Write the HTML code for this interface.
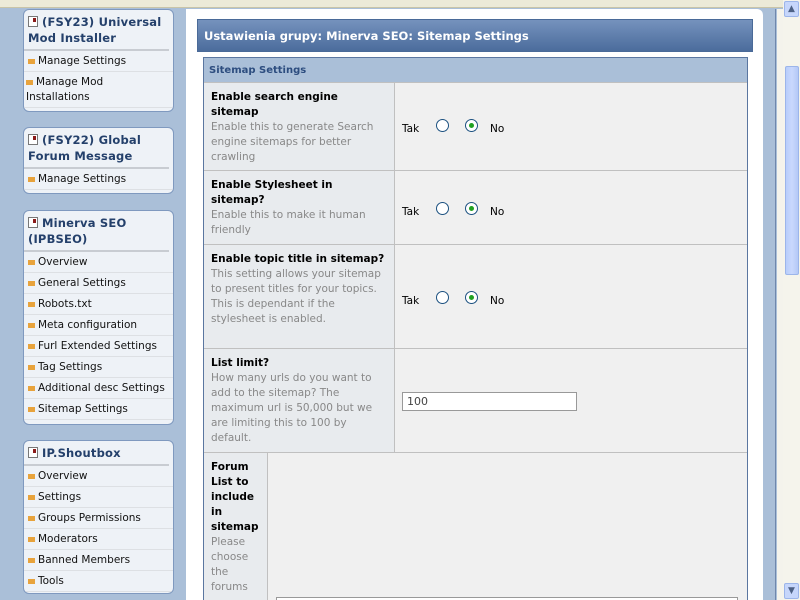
<!DOCTYPE html>
<html><head><meta charset="utf-8"><style>
*{margin:0;padding:0;box-sizing:border-box}
html,body{width:800px;height:600px;overflow:hidden}
body{background:#aabfd8;font-family:"DejaVu Sans",Verdana,sans-serif;position:relative}
.top{position:absolute;left:0;top:0;width:783px;height:8px;background:#ecead8;border-bottom:1px solid #c8c4a8}
.nav{position:absolute;left:23px;width:151px;background:#eef2f7;border:1px solid #7f99bf;border-radius:6px;overflow:hidden}
.nav h3{font-size:11.5px;line-height:16px;color:#24406b;padding:4px 4px 3px 4px;margin:0 4px 0 0;border-bottom:2px solid #c8ccd2;letter-spacing:0.2px}
.ic{display:inline-block;width:10px;height:11px;border:1px solid #777;background:#fff;margin-right:4px;vertical-align:-1px;position:relative}
.ic:after{content:"";position:absolute;left:4px;top:1px;width:3px;height:4px;background:#8b1a1a}
.nav a{display:block;font-size:10.5px;line-height:15px;color:#111;padding:3px 3px 2px 4px;border-bottom:1px solid #dde0e4;text-decoration:none}
.nav a:before{content:"";display:inline-block;width:7px;height:5px;background:#e8a33c;margin-right:3px}
.main{position:absolute;left:186px;top:9px;width:577px;height:591px;background:#fff;border-radius:0 6px 0 0}
.hdr{position:absolute;left:197px;top:19px;width:556px;height:33px;background:linear-gradient(#7592bd,#4b6c9c);border:1px solid #4a6a98;color:#fff;font-weight:bold;font-size:11.5px;line-height:33px;padding-left:6px}
.tbl{position:absolute;left:203px;top:57px;width:545px;height:543px;border:1px solid #5a76a0;border-bottom:0;background:#f0f0f0;overflow:hidden}
.sub{position:absolute;left:0;top:0;width:543px;height:24px;background:#aabfd8;color:#2d4d7f;font-weight:bold;font-size:10px;line-height:26px;padding-left:5px}
.row{position:absolute;left:0;width:543px;border-top:1px solid #c0c0c0}
.l{position:absolute;left:0;top:0;bottom:0;background:#e8ebee;border-right:1px solid #c0c0c0;padding:7px 7px;font-size:10.5px;line-height:15px;color:#888}
.l b{display:block;color:#000;font-size:10.5px;line-height:15px}
.r{position:absolute;font-size:10.5px;color:#000}
.rad{position:absolute;top:0;width:13px;height:13px;border:1px solid #1c5180;border-radius:50%;background:#fff}
.rad.on:after{content:"";position:absolute;left:3px;top:3px;width:5px;height:5px;border-radius:50%;background:#21a121}
.sb{position:absolute;left:783px;top:0;width:17px;height:600px;background:#f5f4ec}
.btn{position:absolute;left:784px;width:15px;height:16px;background:#c6d6fb;border:1px solid #9cb5ea;border-radius:2px;color:#4d6185;font-size:9px;text-align:center;line-height:14px}
.thumb{position:absolute;left:785px;top:66px;width:14px;height:209px;background:linear-gradient(90deg,#b8cdfc,#c9d8fd,#b4c8f6);border:1px solid #9cb5ea;border-radius:2px}
</style></head><body>
<div class="top"></div>
<div class="nav" style="top:9px;height:103px"><h3><span class="ic"></span>(FSY23) Universal Mod Installer</h3><a>Manage Settings</a><a style="padding-left:2px">Manage Mod<br>Installations</a></div>
<div class="nav" style="top:127px;height:67px"><h3><span class="ic"></span>(FSY22) Global Forum Message</h3><a>Manage Settings</a></div>
<div class="nav" style="top:210px;height:215px"><h3><span class="ic"></span>Minerva SEO (IPBSEO)</h3><a>Overview</a><a>General Settings</a><a>Robots.txt</a><a>Meta configuration</a><a>Furl Extended Settings</a><a>Tag Settings</a><a>Additional desc Settings</a><a>Sitemap Settings</a></div>
<div class="nav" style="top:440px;height:154px"><h3><span class="ic"></span>IP.Shoutbox</h3><a>Overview</a><a>Settings</a><a>Groups Permissions</a><a>Moderators</a><a>Banned Members</a><a>Tools</a></div>
<div class="main"></div>
<div style="position:absolute;left:763px;top:9px;width:13px;height:591px;background:#aabfd8;border-right:1px solid #6f87ac"></div>
<div style="position:absolute;left:777px;top:9px;width:6px;height:591px;background:#f4f3ec"></div>
<div class="hdr">Ustawienia grupy: Minerva SEO: Sitemap Settings</div>
<div class="tbl">
<div class="sub">Sitemap Settings</div>
<div class="row" style="top:24px;height:89px"><div class="l" style="width:191px"><b>Enable search engine sitemap</b>Enable this to generate Search engine sitemaps for better crawling</div><div class="r" style="left:198px;top:40px;width:120px;height:14px">Tak<span class="rad" style="left:34px;top:-4px"></span><span class="rad on" style="left:63px;top:-4px"></span><span style="position:absolute;left:88px">No</span></div></div>
<div class="row" style="top:112px;height:75px"><div class="l" style="width:191px"><b>Enable Stylesheet in sitemap?</b>Enable this to make it human friendly</div><div class="r" style="left:198px;top:35px;width:120px;height:14px">Tak<span class="rad" style="left:34px;top:-4px"></span><span class="rad on" style="left:63px;top:-4px"></span><span style="position:absolute;left:88px">No</span></div></div>
<div class="row" style="top:186px;height:105px"><div class="l" style="width:191px"><b>Enable topic title in sitemap?</b>This setting allows your sitemap to present titles for your topics. This is dependant if the stylesheet is enabled.</div><div class="r" style="left:198px;top:50px;width:120px;height:14px">Tak<span class="rad" style="left:34px;top:-4px"></span><span class="rad on" style="left:63px;top:-4px"></span><span style="position:absolute;left:88px">No</span></div></div>
<div class="row" style="top:290px;height:105px"><div class="l" style="width:191px"><b>List limit?</b>How many urls do you want to add to the sitemap? The maximum url is 50,000 but we are limiting this to 100 by default.</div><div class="r" style="left:198px;top:43px;width:175px;height:19px;border:1px solid #999;background:#fff;padding:2px 4px;font-size:11px;color:#444">100</div></div>
<div class="row" style="top:394px;height:170px"><div class="l" style="width:64px"><b>Forum List to include in sitemap</b>Please choose the forums</div><div style="position:absolute;left:72px;top:144px;width:462px;height:20px;border:1px solid #999;background:#fff"></div></div>
</div>
<div class="sb"></div>
<div class="btn" style="top:1px">&#9650;</div>
<div class="thumb"></div>
<div class="btn" style="top:583px">&#9660;</div>
</body></html>
